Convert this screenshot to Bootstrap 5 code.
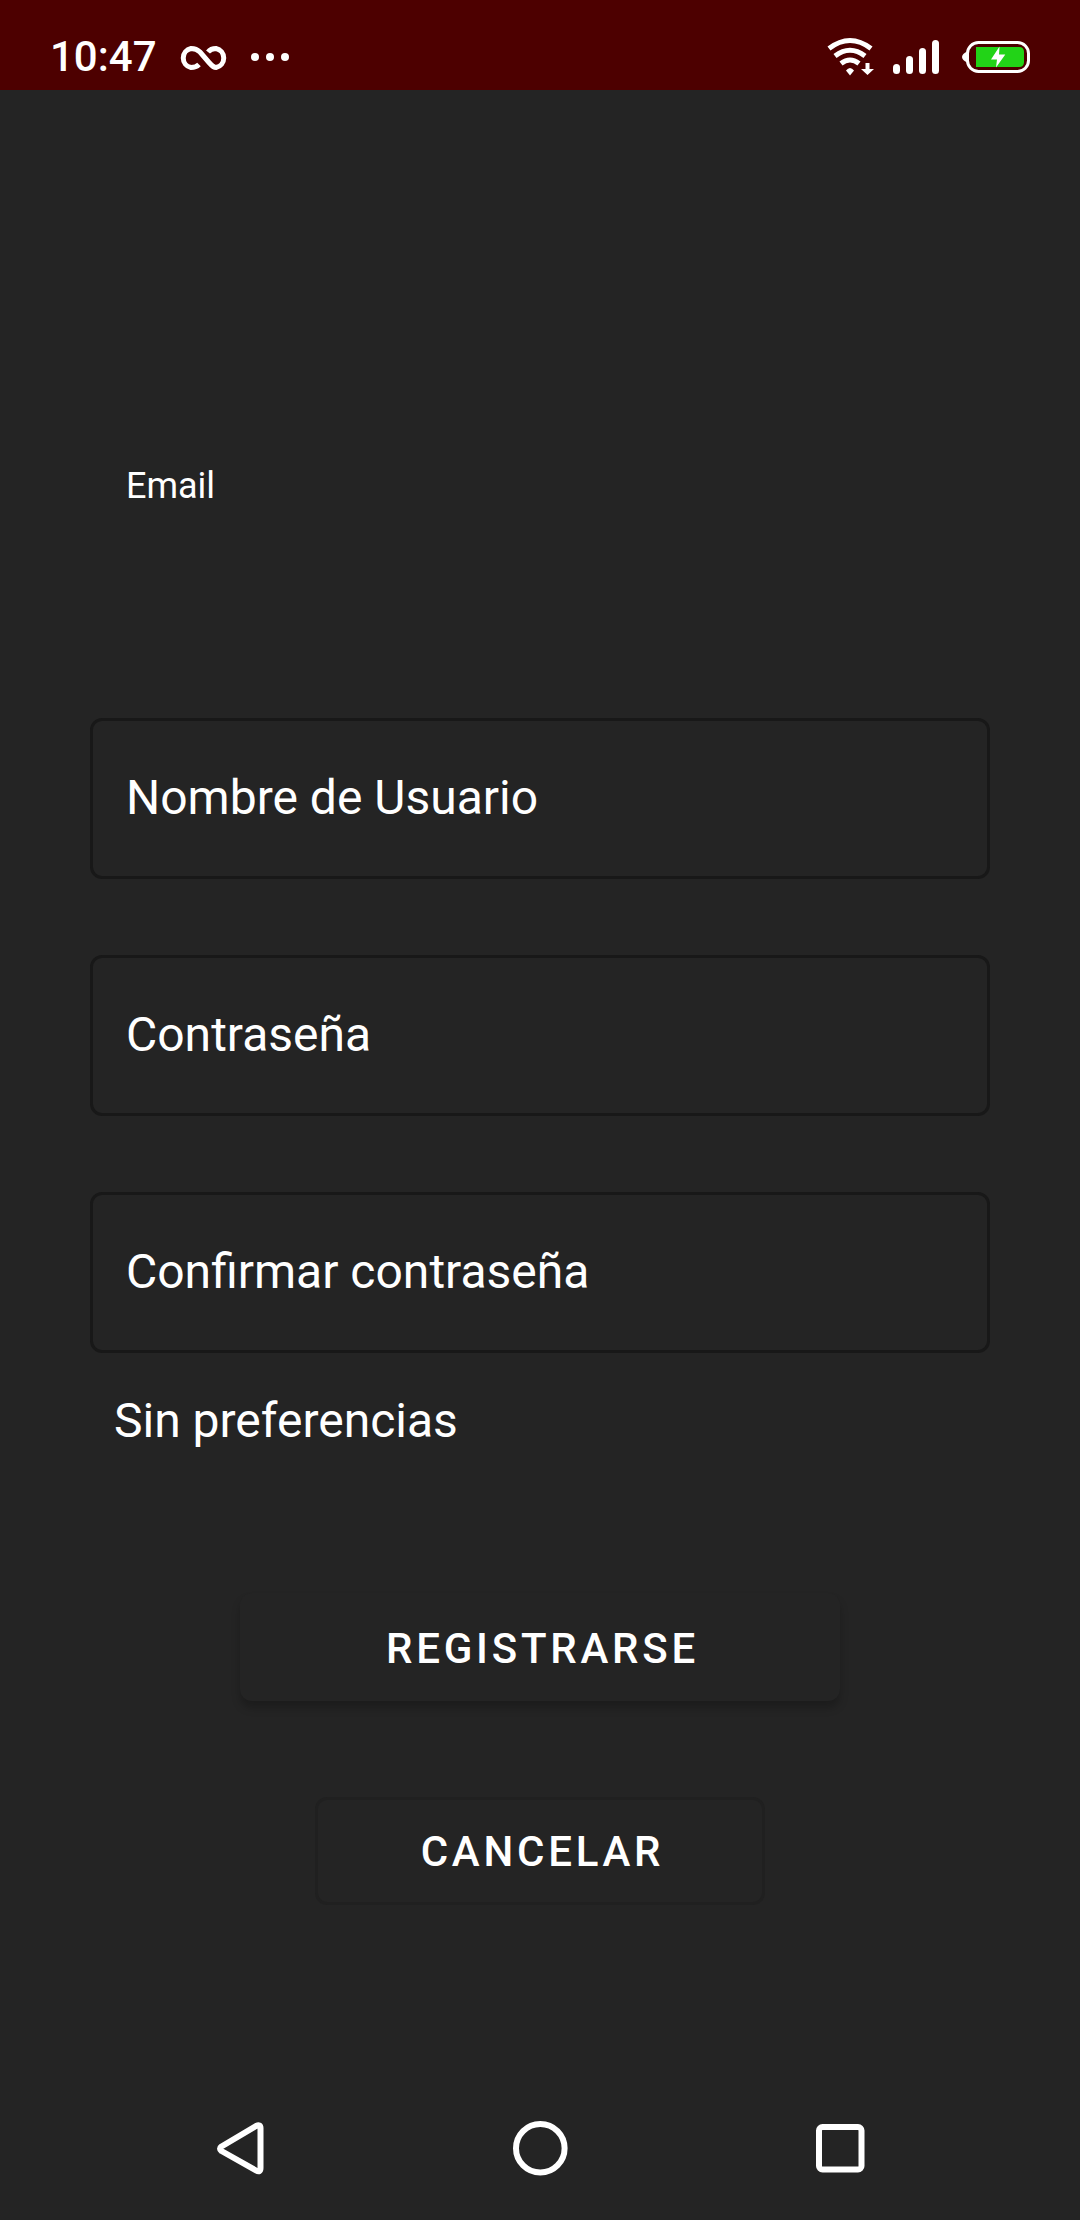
<!DOCTYPE html>
<html lang="es">
<head>
<meta charset="utf-8">
<meta name="viewport" content="width=device-width, initial-scale=1">
<title>Registro</title>
<link href="https://cdn.jsdelivr.net/npm/bootstrap@5.3.0/dist/css/bootstrap.min.css" rel="stylesheet">
<style>
  html, body { height: 100%; }
  body { background: #242424; font-family: Roboto, "Liberation Sans", sans-serif; color: #fff; overflow: hidden; }
  .screen { width: 1080px; height: 2220px; }
  .statusbar { height: 90px; background: #4d0000; padding: 25px 49px 0 50px; }
  .clock { font-size: 42px; line-height: 64px; font-weight: 500; width: 128px; }
  .signup { padding: 372px 90px 0; }
  .email-label { font-size: 36px; line-height: 48px; padding-left: 36px; margin-bottom: 208px; }
  .fields { gap: 76px; }
  .form-control.field { height: 161px; border: 3px solid #181818; border-radius: 12px; background: transparent; color: #fff; padding: 0 33px 1px; font-size: 48px; line-height: 60px; }
  .prefs { font-size: 48px; line-height: 60px; padding-left: 24px; margin-top: 38px; margin-bottom: 142px; }
  .action { --bs-btn-color: #fff; --bs-btn-hover-color: #fff; height: 108px; padding: 4px 0 0 5px; border-radius: 12px; font-size: 42px; font-weight: 500; letter-spacing: 3.75px; line-height: 60px; }
  .action-main { width: 600px; background: #242424; border: 0; box-shadow: 0 7px 8px rgba(0,0,0,.22); margin-bottom: 96px; }
  .action-alt { width: 450px; border: 3px solid #202020; padding-top: 2px; }
  .navkeys { height: 144px; padding: 0 211px 0 212px; }
</style>
<script src="https://cdn.jsdelivr.net/npm/bootstrap@5.3.0/dist/js/bootstrap.bundle.min.js"></script>
</head>
<body>
<div class="screen d-flex flex-column">
  <header class="statusbar d-flex justify-content-between align-items-start">
    <div class="d-flex align-items-start">
      <span class="clock">10:47</span>
      <svg width="115" height="65" viewBox="178 25 115 65" fill="none">
        <path d="M199 64.500C196.500 67 194.500 67.500 191 67.500A9.700 9.700 0 0 1 191 48.500C195 48.500 197.500 49.500 200 52L209 62.500C212 66 213.500 67.500 216 67.500A9.700 9.700 0 0 0 216 48.500C212.500 48.500 210 49.500 208 52" stroke="#fff" stroke-width="5" />
        <g fill="#fff"><circle cx="255" cy="57" r="4"/><circle cx="270" cy="57" r="4"/><circle cx="285" cy="57" r="4"/></g>
      </svg>
    </div>
    <svg width="211" height="65" viewBox="820 25 211 65" fill="none">
      <g stroke="#fff" stroke-width="5">
        <path d="M829 48.500Q850 32.500 871 48.500"/>
        <path d="M835 56Q850 44.500 865 56"/>
        <path d="M841 63.500Q850 56.500 859 63.500"/>
      </g>
      <path d="M846 70.500Q850 65.500 854 70.500L850 75.500Z" fill="#fff"/>
      <path d="M865.500 63H869.500V69H874L867.500 75L861 69H865.500Z" fill="#fff"/>
      <g fill="#fff">
        <rect x="893" y="64" width="7" height="10" rx="3.500"/>
        <rect x="906" y="56" width="7" height="18" rx="3.500"/>
        <rect x="919" y="48" width="7" height="26" rx="3.500"/>
        <rect x="932" y="40" width="7" height="34" rx="3.500"/>
        <path d="M967 51.500C964 53 962 55 962 57S964 61 967 62.500Z"/>
      </g>
      <rect x="967.500" y="42.500" width="61" height="29" rx="11" stroke="#fff" stroke-width="3"/>
      <path d="M976 47H1019Q1024 47 1024 52V62Q1024 67 1019 67H976Z" fill="#22d317"/>
      <path d="M999.500 46.500L991 59.500H997L996 67.500L1005.300 54.500H999Z" fill="#fff"/>
    </svg>
  </header>

  <main class="signup flex-grow-1">
    <div class="email-label">Email</div>
    <div class="fields d-flex flex-column">
      <div class="form-control field d-flex align-items-center">Nombre de Usuario</div>
      <div class="form-control field d-flex align-items-center">Contraseña</div>
      <div class="form-control field d-flex align-items-center">Confirmar contraseña</div>
    </div>
    <div class="prefs">Sin preferencias</div>
    <div class="d-flex flex-column align-items-center">
      <button type="button" class="btn action action-main">REGISTRARSE</button>
      <button type="button" class="btn action action-alt">CANCELAR</button>
    </div>
  </main>

  <nav class="navkeys d-flex justify-content-between align-items-center">
    <svg width="56" height="60" viewBox="212 2118 56 60" fill="none" stroke="#fff" stroke-width="6" stroke-linejoin="round">
      <path d="M221.500 2146.500L256 2126Q260.500 2124 260.500 2128V2168Q260.500 2173 256 2170.500L221.500 2151Q218.500 2148.700 221.500 2146.500Z"/>
    </svg>
    <svg width="60" height="60" viewBox="510 2118 60 60" fill="none" stroke="#fff" stroke-width="6">
      <circle cx="540.300" cy="2148.300" r="24.300"/>
    </svg>
    <svg width="58" height="60" viewBox="811 2118 58 60" fill="none" stroke="#fff" stroke-width="6">
      <rect x="819" y="2127" width="42.500" height="42.500" rx="3.500"/>
    </svg>
  </nav>
</div>
</body>
</html>
